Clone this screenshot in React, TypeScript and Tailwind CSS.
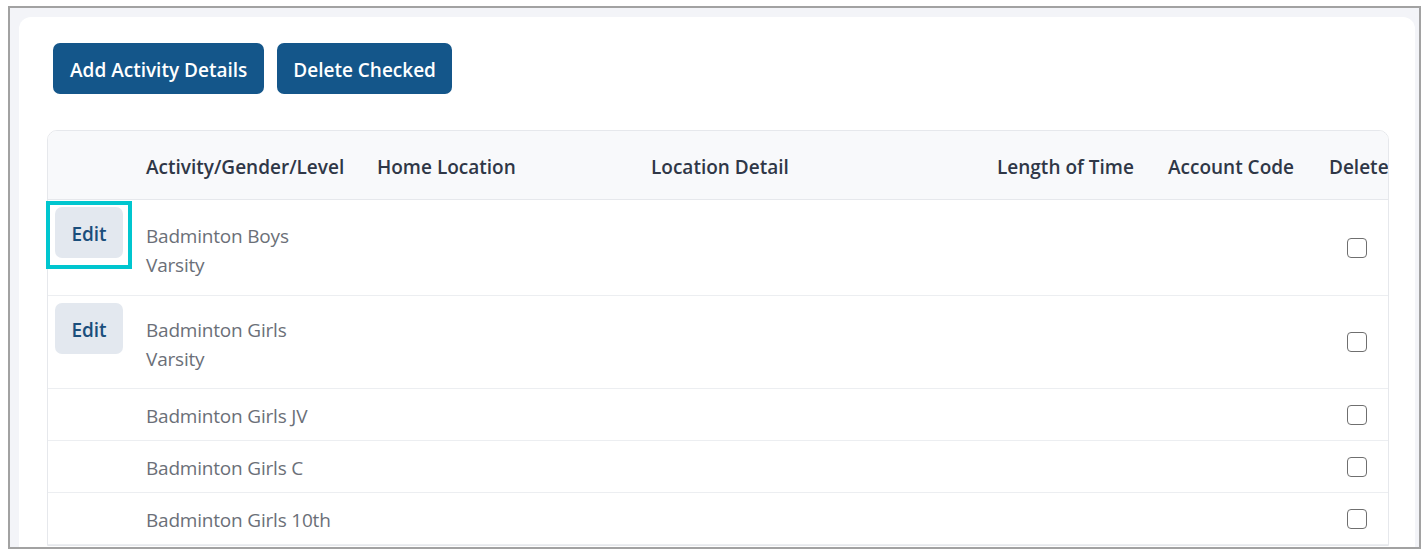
import React from "react";

type Row = {
  name: string[];
  edit: boolean;
  height: string;
  pad: string;
};

const rows: Row[] = [
  { name: ["Badminton Boys", "Varsity"], edit: true, height: "h-[96px]", pad: "pt-[22px]" },
  { name: ["Badminton Girls", "Varsity"], edit: true, height: "h-[93px]", pad: "pt-[20px]" },
  { name: ["Badminton Girls JV"], edit: false, height: "h-[52px]", pad: "flex items-center pt-[4px]" },
  { name: ["Badminton Girls C"], edit: false, height: "h-[52px]", pad: "flex items-center pt-[4px]" },
  { name: ["Badminton Girls 10th"], edit: false, height: "h-[52px]", pad: "flex items-center pt-[4px]" },
];

const cols = "grid grid-cols-[83px_231px_274px_346px_171px_161px_86px]";

function Checkbox() {
  return <span className="block h-[20px] w-[20px] rounded-[4px] border-[1.5px] border-[#6f6f6f] bg-white" />;
}

export default function App() {
  return (
    <div className="h-[555px] w-[1428px] overflow-hidden bg-white pl-[8px] pt-[6px] font-['Open_Sans',sans-serif]">
      <div className="h-[543px] w-[1413px] overflow-hidden border-2 border-[#a2a2a2] bg-[#f3f4f8] pl-[9px] pr-[4px] pt-[9px]">
        <div className="h-[600px] rounded-[12px] bg-white px-[28px] pt-[26px]">
          <div className="ml-[6px] flex gap-[13px]">
            <button className="h-[51px] rounded-[7px] bg-[#14568a] px-[17px] pt-[3px] text-[19px] font-semibold text-white">
              Add Activity Details
            </button>
            <button className="h-[51px] rounded-[7px] bg-[#14568a] px-[16px] pt-[3px] text-[19px] font-semibold text-white">
              Delete Checked
            </button>
          </div>

          <div className="relative mt-[36px]">
            <div className="w-[1342px] overflow-hidden rounded-t-[10px] border border-[#e6e8ec]">
              <div className={`${cols} h-[69px] items-center border-b border-[#e6e8ec] bg-[#f8f9fb] pt-[4px] text-[19px] font-semibold text-[#2f3747]`}>
                <div />
                <div className="whitespace-nowrap pl-[15px]">Activity/Gender/Level</div>
                <div className="whitespace-nowrap pl-[15px]">Home Location</div>
                <div className="whitespace-nowrap pl-[15px]">Location Detail</div>
                <div className="whitespace-nowrap pl-[15px]">Length of Time</div>
                <div className="whitespace-nowrap pl-[15px]">Account Code</div>
                <div className="whitespace-nowrap pl-[15px]">Delete</div>
              </div>
              {rows.map((r, i) => (
                <div key={i} className={`${cols} ${r.height} border-b border-[#eceef1] text-[19px] tracking-[-0.2px] text-[#6b6f78]`}>
                  <div className="pl-[7px] pt-[7px]">
                    {r.edit && (
                      <button className="h-[51px] w-[68px] rounded-[7px] bg-[#e3e8ef] pt-[4px] text-[19px] font-semibold tracking-normal text-[#1a4e7c]">
                        Edit
                      </button>
                    )}
                  </div>
                  <div className={`pl-[15px] leading-[29px] ${r.pad}`}>
                    <div>
                      {r.name.map((n) => (
                        <div key={n} className="whitespace-nowrap">{n}</div>
                      ))}
                    </div>
                  </div>
                  <div />
                  <div />
                  <div />
                  <div />
                  <div className="flex items-center justify-center">
                    <Checkbox />
                  </div>
                </div>
              ))}
            </div>
            <div className="absolute left-[-1px] top-[71px] h-[68px] w-[86px] border-4 border-[#00c6cf]" />
          </div>
        </div>
      </div>
    </div>
  );
}
